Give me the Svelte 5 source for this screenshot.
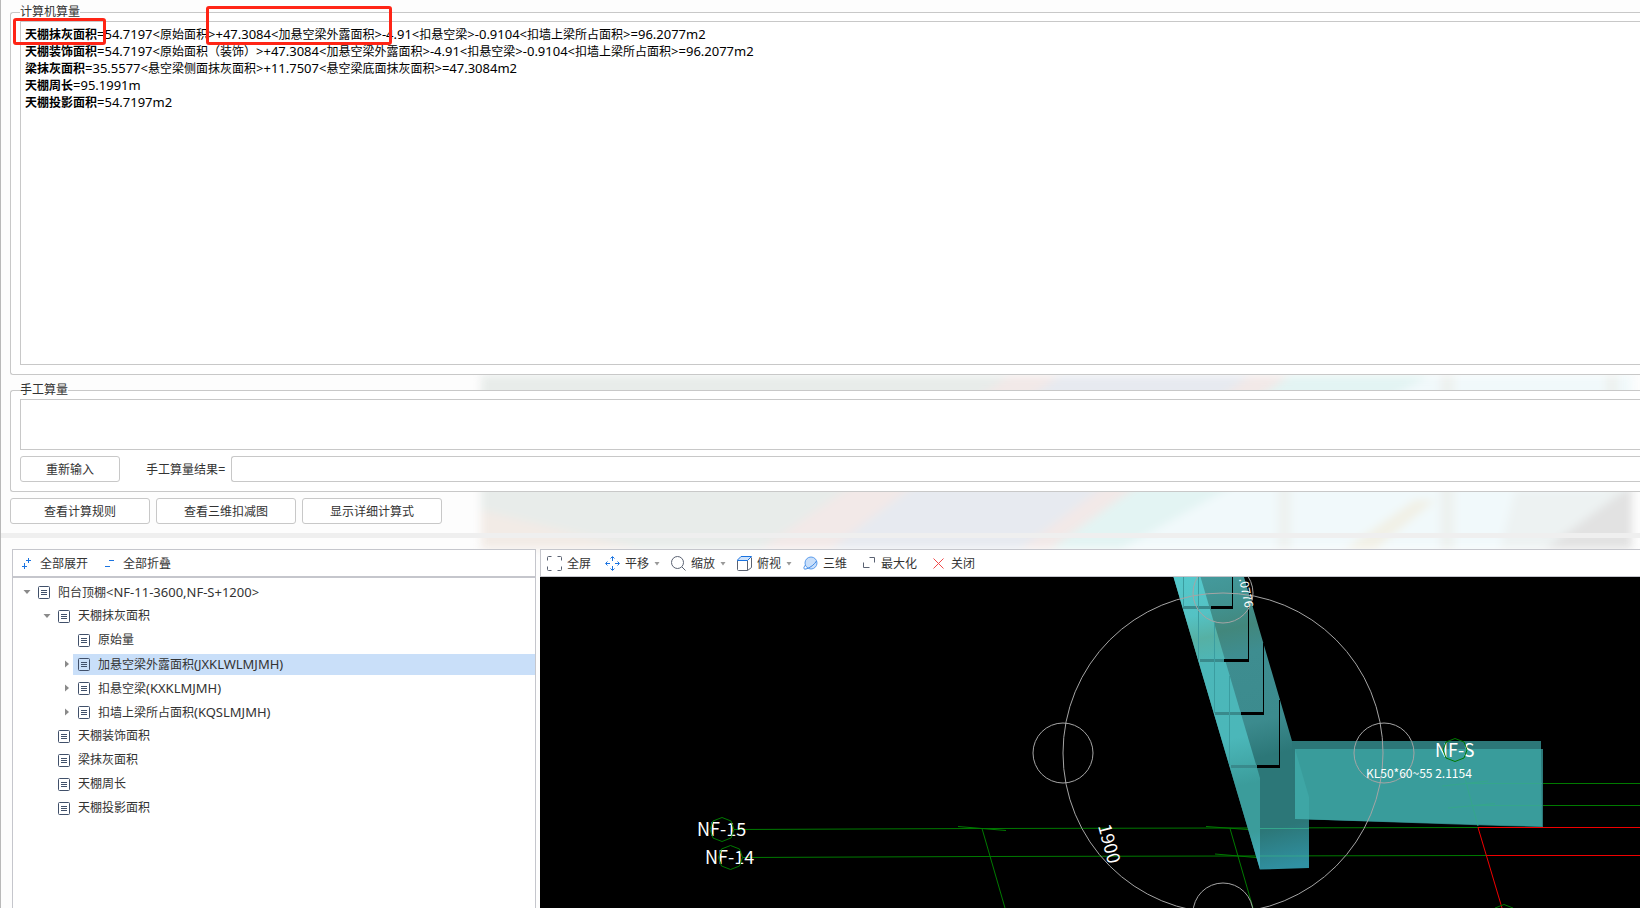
<script>
  let nodes = $state([
    { id: 1, level: 0, text: "阳台顶棚<NF-11-3600,NF-S+1200>", open: true },
    { id: 2, level: 1, text: "天棚抹灰面积", open: true },
    { id: 3, level: 2, text: "原始量" },
    { id: 4, level: 2, text: "加悬空梁外露面积(JXKLWLMJMH)", open: false },
    { id: 5, level: 2, text: "扣悬空梁(KXKLMJMH)", open: false },
    { id: 6, level: 2, text: "扣墙上梁所占面积(KQSLMJMH)", open: false },
    { id: 7, level: 1, text: "天棚装饰面积" },
    { id: 8, level: 1, text: "梁抹灰面积" },
    { id: 9, level: 1, text: "天棚周长" },
    { id: 10, level: 1, text: "天棚投影面积" },
  ]);
  let selected = $state(4);
  let manual = $state("");
  let result = $state("");

  const formulas = [
    {
      name: "天棚抹灰面积",
      value:
        "=54.7197<原始面积>+47.3084<加悬空梁外露面积>-4.91<扣悬空梁>-0.9104<扣墙上梁所占面积>=96.2077m2",
    },
    {
      name: "天棚装饰面积",
      value:
        "=54.7197<原始面积（装饰）>+47.3084<加悬空梁外露面积>-4.91<扣悬空梁>-0.9104<扣墙上梁所占面积>=96.2077m2",
    },
    {
      name: "梁抹灰面积",
      value: "=35.5577<悬空梁侧面抹灰面积>+11.7507<悬空梁底面抹灰面积>=47.3084m2",
    },
    { name: "天棚周长", value: "=95.1991m" },
    { name: "天棚投影面积", value: "=54.7197m2" },
  ];

  const tools = [
    { icon: "full", text: "全屏" },
    { icon: "pan", text: "平移", menu: true },
    { icon: "zoom", text: "缩放", menu: true },
    { icon: "cube", text: "俯视", menu: true },
    { icon: "orbit", text: "三维" },
    { icon: "max", text: "最大化" },
    { icon: "close", text: "关闭" },
  ];

  // Rows hidden under a closed parent are skipped
  let visible = $derived.by(() => {
    const rows = [];
    let closedAt = Infinity;
    for (const node of nodes) {
      if (node.level > closedAt) continue;
      closedAt = node.open === false ? node.level : Infinity;
      rows.push(node);
    }
    return rows;
  });

  function setAll(open) {
    nodes.forEach((node) => {
      if (node.open !== undefined) node.open = open;
    });
  }

  function resetInput() {
    manual = "";
    result = "";
  }

  // Odd parts are the latin runs, which are set one size larger
  function runs(text) {
    return text.split(/([\x21-\x7e]+)/);
  }
</script>

{#snippet mixed(text)}
  <span>{#each runs(text) as part, i}{#if i % 2}<span class="latin">{part}</span>{:else}{part}{/if}{/each}</span>
{/snippet}

<main>
  <section class="calc">
    <svg class="backdrop" viewBox="480 375 1152 174" preserveAspectRatio="none" aria-hidden="true">
      <rect x="480" y="375" width="1152" height="174" fill="#e8ecea" />
      <path d="M480 510L640 549H480z" fill="#f2ebe6" />
      <path d="M1010 375H1060L830 549H760z" fill="#f2e9e8" />
      <path d="M1060 375H1250L1025 549H830z" fill="#e7eaf0" />
      <path d="M1250 375H1290L1060 549H1020z" fill="#f2e9e8" />
      <path d="M1290 375H1440L1130 549H1050z" fill="#e3f4f3" />
      <path d="M1430 375H1632V549H1120z" fill="#f1f9fb" />
      <path d="M1440 375h14v174h-14zM1278 485h12v64h-12zM1606 375h12v174h-12z" fill="#edf1ef" />
      <path d="M1515 490H1632V549H1500z" fill="#edf2f2" />
      <path d="M1415 500H1435L1375 549H1345z" fill="#f1f0e6" />
      <path d="M1632 485V549H1545z" fill="#e2e2e2" />
    </svg>

    <fieldset>
      <legend>计算机算量</legend>
      <div class="log">
        {#each formulas as f}
          <p><b>{f.name}</b>{@render mixed(f.value)}</p>
        {/each}
        <span class="mark mark-name"></span>
        <span class="mark mark-part"></span>
      </div>
    </fieldset>

    <fieldset>
      <legend>手工算量</legend>
      <textarea aria-label="手工算量" bind:value={manual}></textarea>
      <div class="result">
        <button class="btn reset" onclick={resetInput}>重新输入</button>
        <label for="result">{@render mixed("手工算量结果=")}</label>
        <input id="result" type="text" bind:value={result} />
      </div>
    </fieldset>

    <div class="actions">
      <button class="btn">查看计算规则</button>
      <button class="btn">查看三维扣减图</button>
      <button class="btn">显示详细计算式</button>
    </div>
  </section>

  <div class="splitter"></div>

  <section class="detail">
    <div class="side">
      <div class="bar side-bar">
        <button class="tool" onclick={() => setAll(true)}>
          <svg width="16" height="16" viewBox="0 0 16 16" fill="none" stroke="#1a73e0">
            <path d="M4.5 7v6M2 10.5h5M8.5 2v5M6 4.5h5" />
          </svg>
          全部展开
        </button>
        <button class="tool" onclick={() => setAll(false)}>
          <svg width="16" height="16" viewBox="0 0 16 16" fill="none" stroke="#1a73e0">
            <path d="M2 10.5h5M6 4.5h5" />
          </svg>
          全部折叠
        </button>
      </div>
      <ul class="tree">
        {#each visible as node (node.id)}
          <li class="level-{node.level}">
            {#if node.open !== undefined}
              <button
                class="twist"
                aria-label={node.text}
                aria-expanded={node.open}
                onclick={() => (node.open = !node.open)}
              >
                <svg width="8" height="8" viewBox="0 0 8 8" fill="#8a8a8a">
                  <path d={node.open ? "M0.5 2h7L4 6z" : "M2 0.5v7L6 4z"} />
                </svg>
              </button>
            {:else}
              <span class="twist"></span>
            {/if}
            <button
              class="node"
              class:selected={selected === node.id}
              onclick={() => (selected = node.id)}
            >
              <svg width="12" height="13" viewBox="0 0 12 13" fill="none" stroke="#40506a">
                <rect x="0.5" y="0.5" width="11" height="12" rx="1" />
                <path d="M3 4.5h6M3 6.5h6M3 8.5h6" />
              </svg>
              {@render mixed(node.text)}
            </button>
          </li>
        {/each}
      </ul>
    </div>

    <div class="viewer">
      <div class="bar view-bar">
        {#each tools as t}
          <button class="tool" class:plain={!t.menu}>
            <svg width="15" height="16" viewBox="0 0 15 16" fill="none" stroke="#5a6272">
              {#if t.icon === "full"}
                <path d="M0.5 4.5V1.5Q0.5 0.5 1.5 0.5H4.5M10.5 0.5H13.5Q14.5 0.5 14.5 1.5V4.5M14.5 10.5V13.5Q14.5 14.5 13.5 14.5H10.5M4.5 14.5H1.5Q0.5 14.5 0.5 13.5V10.5" />
              {:else if t.icon === "pan"}
                <path
                  d="M5.5 2.5L7.5 0.5L9.500 2.5M5.5 12.5L7.5 14.5L9.5 12.5M2.5 5.5L0.5 7.5L2.500 9.5M12.5 5.5L14.5 7.5L12.5 9.5M7.5 1v4M7.5 10v4M1 7.5h4M10 7.5h4"
                  stroke="#1a73e0"
                />
              {:else if t.icon === "zoom"}
                <circle cx="6.5" cy="6.5" r="6" />
                <path d="M11 11L14.500 14.5" />
              {:else if t.icon === "cube"}
                <path d="M0.5 4.5H10.5V14.5H1.5Q0.5 14.5 0.5 13.5zM10.5 14.5L14.5 11.5V1.5" />
                <path d="M0.5 4L4 0.5H14.5L10.5 4.5H0.5z" fill="#cfe3fb" stroke="#1a73e0" />
              {:else if t.icon === "orbit"}
                <circle cx="8" cy="7" r="6" fill="#c9dffa" stroke="#5b9cec" />
                <path d="M2.5 9C0 12 0.5 13.5 3 13C7 12 12 8 13.5 5" stroke="#3f8ae6" />
              {:else if t.icon === "max"}
                <path d="M8.5 1.5H13.5V6.5M2.5 6.5V11.5H8.5" />
              {:else}
                <path d="M2.5 2.5L12.5 12.5M12.5 2.5L2.5 12.5" stroke="#f04848" />
              {/if}
            </svg>
            {t.text}
            {#if t.menu}
              <svg width="6" height="4" viewBox="0 0 6 4" fill="#999"><path d="M0.5 0h5L3 3.5z" /></svg>
            {/if}
          </button>
        {/each}
      </div>

      <svg class="scene">
        <defs>
          <linearGradient id="face" gradientUnits="userSpaceOnUse" x1="1190" y1="577" x2="1250" y2="869">
            <stop offset="0" stop-color="#55c8cb" />
            <stop offset="0.13" stop-color="#54c2c4" />
            <stop offset="0.21" stop-color="#56b0a4" />
            <stop offset="0.3" stop-color="#4cb7b9" />
            <stop offset="0.56" stop-color="#4bb7b9" />
            <stop offset="0.72" stop-color="#3b9c9b" />
            <stop offset="0.88" stop-color="#3b9c9b" />
            <stop offset="1" stop-color="#44afbf" />
          </linearGradient>
          <linearGradient id="side" gradientUnits="userSpaceOnUse" x1="1215" y1="577" x2="1285" y2="869">
            <stop offset="0" stop-color="#44999b" />
            <stop offset="0.1" stop-color="#41918f" />
            <stop offset="0.18" stop-color="#42877c" />
            <stop offset="0.27" stop-color="#3e8d90" />
            <stop offset="0.5" stop-color="#3c8b8e" />
            <stop offset="0.62" stop-color="#2c7778" />
            <stop offset="0.86" stop-color="#2c7778" />
            <stop offset="1" stop-color="#3091a3" />
          </linearGradient>
        </defs>

        <!-- model space starts at 540,577 -->
        <g transform="translate(-540 -577)">
          <!-- axis grid -->
          <g class="axis">
            <path d="M734 829.5L982 828.5L1478 827.5M743 857.5L982 856.5L1487 855.5" />
            <path d="M958 826.5L1006 830.5M982 828.5L1005 908" />
            <path d="M1206 826.5L1248 829.5M1215 854L1262 858M1230 828.5L1253 908" />
            <path d="M1542 783.5H1700M1542 805.5H1700" />
          </g>
          <path class="axis-red" d="M1700 827.5H1478L1502 908M1487 855.5H1700" />

          <!-- beams -->
          <path d="M1173.5 577H1244L1292 741H1540V790H1309V868L1260 869.5z" fill="url(#side)" />
          <path d="M1292 741H1541V749H1543V827L1500 826L1295 819z" fill="#2c7778" />
          <path d="M1173.5 577H1200.5L1260 778V869.5z" fill="url(#face)" />
          <path d="M1295 749H1541L1542 826.5L1295 819z" fill="#399c9b" />
          <path d="M1295 749L1309 797V819H1295z" fill="#3ea6a5" />
          <path class="step" d="M1211 607.5H1233M1223 660.5H1249M1240 713.5H1264M1256 766.5H1280" />
          <path class="step-soft" d="M1183 607.5H1211M1200 660.5H1224M1215 713.5H1241M1231 766.5H1257" />
          <path class="edge" d="M1232.5 577V608M1248.5 605V662M1263.5 643V714M1279.5 700V767" />
          <path class="edge-soft" d="M1183.5 577V607M1198.5 577V660M1214.5 622V713M1229.5 676V766" />
          <path
            class="axis-faint"
            d="M1442 786L1488 781M1466 783.5H1542M1448 808L1495 803.5M1473 805.5H1542M1461 764L1478 826M1309 828.5H1260M1309 856H1260"
          />

          <!-- orbit handles -->
          <g class="orbit">
            <circle cx="1223" cy="753" r="160" />
            <circle cx="1063" cy="753" r="30" />
            <circle cx="1384" cy="753" r="30" />
            <circle cx="1223" cy="593" r="30" />
            <circle cx="1223" cy="913" r="30" />
          </g>

          <g class="label">
            <text x="697" y="836">NF-15</text>
            <text x="705" y="864">NF-14</text>
            <text x="1435" y="757">NF-S</text>
            <text x="1098" y="826" transform="rotate(75 1098 826)">1900</text>
            <text class="small" x="1366" y="778">KL50*60~55 2.1154</text>
            <text class="small" x="1239" y="579" transform="rotate(78 1239 579)">.0776</text>
          </g>
          <g class="axis">
            <path d="M722 817.5L731 821L734 829.5L731 838L722 841.5L713 838L710 829.5L713 821z" />
            <path d="M730.5 845.5L739.5 849L742.5 857.5L739.5 866L730.5 869.5L721.5 866L718.5 857.5L721.5 849z" />
            <path d="M1455 738.5L1464 742L1467 750L1464 758L1455 761.5L1446 758L1443 750L1446 742z" />
            <path d="M1495 908L1504 904.5L1513 908" />
          </g>
        </g>
      </svg>
    </div>
  </section>
</main>

<style>
  :global(body) {
    background: #fdfdfd;
  }

  main {
    display: flex;
    flex-direction: column;
    height: 100vh;
    box-sizing: border-box;
    border-left: 1px solid #b9b9b9;
    overflow: hidden;
    color: #333;
    font: 12px/16px "Noto Sans", "Noto Sans CJK SC", sans-serif;
  }

  button,
  input,
  textarea {
    box-sizing: border-box;
    margin: 0;
    font: inherit;
    color: inherit;
  }

  .latin {
    font-size: 13px;
  }

  .calc {
    position: relative;
    padding: 4px 0 9px 9px;
  }

  .backdrop {
    position: absolute;
    left: 480px;
    bottom: -16px;
    width: calc(100% - 488px);
    height: 174px;
    filter: blur(4px);
  }

  fieldset {
    position: relative;
    min-width: 0;
    margin: 0;
    padding: 1px 0 9px 9px;
    border: 1px solid #c8c8c8;
    border-right: 0;
    border-radius: 3px 0 0 3px;
    background: #fff;
  }

  fieldset + fieldset {
    margin-top: 7px;
  }

  legend {
    padding: 0;
  }

  .log {
    position: relative;
    height: 344px;
    box-sizing: border-box;
    padding: 4px;
    border: 1px solid #c8c8c8;
    border-right: 0;
    color: #000;
  }

  .log p {
    margin: 0;
    line-height: 17px;
    white-space: nowrap;
  }

  .mark {
    position: absolute;
    box-sizing: border-box;
    border: 3px solid #ff2516;
    border-radius: 3px;
  }

  .mark-name {
    left: -8px;
    top: -4px;
    width: 93px;
    height: 27px;
  }

  .mark-part {
    left: 185px;
    top: -16px;
    width: 186px;
    height: 39px;
  }

  textarea {
    display: block;
    width: 100%;
    height: 51px;
    padding: 4px;
    border: 1px solid #c8c8c8;
    border-right: 0;
    border-radius: 0;
    background: #fff;
    resize: none;
    outline: none;
  }

  .result {
    display: flex;
    align-items: center;
    margin-top: 6px;
  }

  .result label {
    margin: 0 6px 0 26px;
  }

  .result input {
    flex: 1;
    height: 26px;
    padding: 0 4px;
    border: 1px solid #c8c8c8;
    border-right: 0;
    border-radius: 3px 0 0 3px;
    outline: none;
  }

  .btn {
    width: 140px;
    height: 26px;
    padding: 1px 0 0;
    border: 1px solid #c8c8c8;
    border-radius: 3px;
    background: #fff;
  }

  .btn:hover {
    background: #f2f7fe;
  }

  .reset {
    width: 100px;
  }

  .actions {
    position: relative;
    display: flex;
    gap: 6px;
    margin-top: 6px;
  }

  .splitter {
    position: relative;
    height: 5px;
    flex: none;
    background: #efefef;
    cursor: row-resize;
  }

  .detail {
    position: relative;
    display: flex;
    gap: 4px;
    flex: 1;
    min-height: 0;
    padding: 11px 0 0 11px;
  }

  .side {
    display: flex;
    flex-direction: column;
    width: 524px;
    flex: none;
  }

  .bar {
    display: flex;
    align-items: center;
    box-sizing: border-box;
    height: 28px;
    flex: none;
    border: 1px solid #c5c6cc;
    background: #fff;
  }

  .side-bar {
    gap: 15px;
    padding-left: 7px;
  }

  .view-bar {
    gap: 11px;
    padding-left: 6px;
    border-right: 0;
  }

  .tool {
    display: flex;
    align-items: center;
    gap: 4px;
    height: 24px;
    padding: 2px 0 0;
    border: 0;
    background: none;
    white-space: nowrap;
  }

  .view-bar .tool {
    gap: 5px;
  }

  .view-bar .plain {
    padding-right: 3px;
  }

  .tree {
    flex: 1;
    margin: 0;
    padding: 2px 0 0;
    border: 1px solid #c5c6cc;
    border-bottom: 0;
    background: #fff;
    list-style: none;
  }

  .tree li {
    display: flex;
    align-items: center;
    height: 24px;
  }

  .level-1 {
    padding-left: 20px;
  }

  .level-2 {
    padding-left: 40px;
  }

  .twist {
    display: flex;
    align-items: center;
    justify-content: flex-end;
    width: 20px;
    height: 20px;
    box-sizing: border-box;
    flex: none;
    padding: 0 2px 0 0;
    border: 0;
    background: none;
  }

  .node {
    display: flex;
    align-items: center;
    gap: 8px;
    flex: 1;
    height: 21px;
    padding: 0 5px;
    border: 0;
    background: none;
    text-align: left;
  }

  .node.selected {
    background: #c9dff9;
  }

  .viewer {
    display: flex;
    flex-direction: column;
    flex: 1;
    min-width: 0;
  }

  .scene {
    display: block;
    width: 100%;
    flex: 1;
    min-height: 0;
    background: #000;
  }

  .axis path {
    fill: none;
    stroke: #007a00;
  }

  .axis-red {
    fill: none;
    stroke: #f00000;
  }

  .axis-faint {
    fill: none;
    stroke: #35a68c;
  }

  .step {
    stroke: #000;
    stroke-width: 3px;
  }

  .step-soft {
    stroke: #398a8c;
    stroke-width: 3px;
  }

  .edge {
    stroke: #000;
  }

  .edge-soft {
    stroke: #3b9da0;
  }

  .orbit circle {
    fill: none;
    stroke: #a5a5a5;
  }

  .label text {
    fill: #fff;
    font: 18px "Noto Sans CJK SC", sans-serif;
  }

  .label .small {
    font-size: 12px;
  }
</style>
